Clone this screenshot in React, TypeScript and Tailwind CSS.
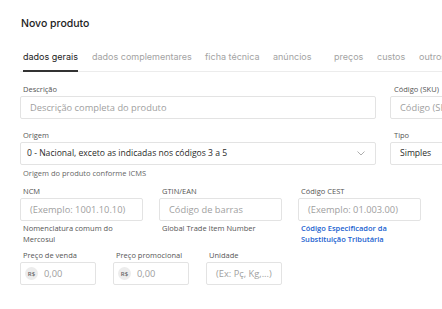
import React from "react";

const body = { fontFamily: '"Open Sans", "Noto Sans", sans-serif' };

function Label({ children, className = "" }: { children: React.ReactNode; className?: string }) {
  return (
    <div className={"text-[7.5px] leading-[10px] text-[#555] pl-[3px] mb-[2px] whitespace-nowrap " + className}>
      {children}
    </div>
  );
}

function Input({ placeholder, w, className = "" }: { placeholder: string; w: string; className?: string }) {
  return (
    <div
      className={
        "h-[23px] border border-[#e3e3e3] rounded-[2px] flex items-center pl-[9px] text-[9.3px] text-[#a0a0a0] whitespace-nowrap overflow-hidden bg-white " +
        w +
        " " +
        className
      }
    >
      {placeholder}
    </div>
  );
}

function Money({ w }: { w: string }) {
  return (
    <div className={"h-[23px] border border-[#e3e3e3] rounded-[2px] flex items-center pl-[4px] " + w}>
      <div className="w-[13px] h-[13px] rounded-full bg-[#ececec] flex items-center justify-center text-[6px] leading-none text-[#666] font-semibold">
        R$
      </div>
      <span className="ml-[6px] text-[9.3px] text-[#a0a0a0]">0,00</span>
    </div>
  );
}

export default function App() {
  const tabs: [string, string][] = [
    ["dados gerais", "w-[69px]"],
    ["dados complementares", "w-[113px]"],
    ["ficha técnica", "w-[68px]"],
    ["anúncios", "w-[61px]"],
    ["preços", "w-[43px]"],
    ["custos", "w-[42px]"],
    ["outros", "w-[40px]"],
  ];
  return (
    <div className="w-[442px] h-[309px] overflow-hidden bg-white" style={body}>
      <div className="pl-[20px]">
        <div
          className="pt-[17px] pl-[1px] text-[10.5px] leading-[14px] text-[#222] font-medium"
          style={{ fontFamily: 'Inter, "DejaVu Sans", sans-serif' }}
        >
          Novo produto
        </div>
        <div
          className="mt-[19px] flex items-start border-b border-[#ececec] pl-[3px] whitespace-nowrap leading-none"
          style={{ fontFamily: 'Inter, "DejaVu Sans", sans-serif' }}
        >
          {tabs.map(([t, w], i) => (
            <div key={t} className={"shrink-0 flex " + w}>
              <span
                className={
                  "block text-[9px] leading-[14px] " +
                  (i === 0 ? "text-[#222] border-b-2 border-[#333] pb-[6px] mb-[-1px]" : "text-[#a3a3a3] pb-[7px]")
                }
              >
                {t}
              </span>
            </div>
          ))}
        </div>

        <div className="mt-[12px] flex gap-[14px]">
          <div>
            <Label>Descrição</Label>
            <Input placeholder="Descrição completa do produto" w="w-[356px]" className="border-[#a9c6ec]" />
          </div>
          <div>
            <Label className="pl-[4px]">Código (SKU)</Label>
            <Input placeholder="Código (SKU)" w="w-[80px]" />
          </div>
        </div>

        <div className="mt-[11px] flex gap-[14px]">
          <div>
            <Label>Origem</Label>
            <div className="w-[356px] h-[23px] border border-[#e3e3e3] rounded-[2px] flex items-center justify-between pl-[6px] pr-[10px] text-[8.6px] text-[#2a2a2a]">
              <span>0 - Nacional, exceto as indicadas nos códigos 3 a 5</span>
              <svg width="8" height="5" viewBox="0 0 8 5" fill="none">
                <path d="M0.5 0.5 L4 4 L7.5 0.5" stroke="#999" strokeWidth="0.8" />
              </svg>
            </div>
            <div className="text-[7.5px] leading-[11px] text-[#666] pl-[3px] mt-[3px]">
              Origem do produto conforme ICMS
            </div>
          </div>
          <div>
            <Label className="pl-[4px]">Tipo</Label>
            <div className="w-[80px] h-[23px] border border-[#e3e3e3] rounded-[2px] flex items-center pl-[9px] text-[8.6px] text-[#2a2a2a]">
              Simples
            </div>
          </div>
        </div>

        <div className="mt-[7px] flex gap-[16px]">
          <div>
            <Label>NCM</Label>
            <Input placeholder="(Exemplo: 1001.10.10)" w="w-[123px]" />
            <div className="text-[7.5px] leading-[11px] text-[#555] pl-[3px] mt-[2px]">
              Nomenclatura comum do
              <br />
              Mercosul
            </div>
          </div>
          <div>
            <Label>GTIN/EAN</Label>
            <Input placeholder="Código de barras" w="w-[123px]" />
            <div className="text-[7.5px] leading-[11px] text-[#555] pl-[3px] mt-[2px]">Global Trade Item Number</div>
          </div>
          <div>
            <Label>Código CEST</Label>
            <Input placeholder="(Exemplo: 01.003.00)" w="w-[123px]" />
            <div className="text-[7.5px] leading-[11px] text-[#1a5fd0] font-semibold pl-[3px] mt-[2px]">
              Código Especificador da
              <br />
              Substituição Tributária
            </div>
          </div>
        </div>

        <div className="mt-[5px] flex gap-[17px]">
          <div>
            <Label>Preço de venda</Label>
            <Money w="w-[76px]" />
          </div>
          <div>
            <Label>Preço promocional</Label>
            <Money w="w-[76px]" />
          </div>
          <div>
            <Label>Unidade</Label>
            <Input placeholder="(Ex: Pç, Kg,...)" w="w-[76px]" />
          </div>
        </div>
      </div>
    </div>
  );
}
